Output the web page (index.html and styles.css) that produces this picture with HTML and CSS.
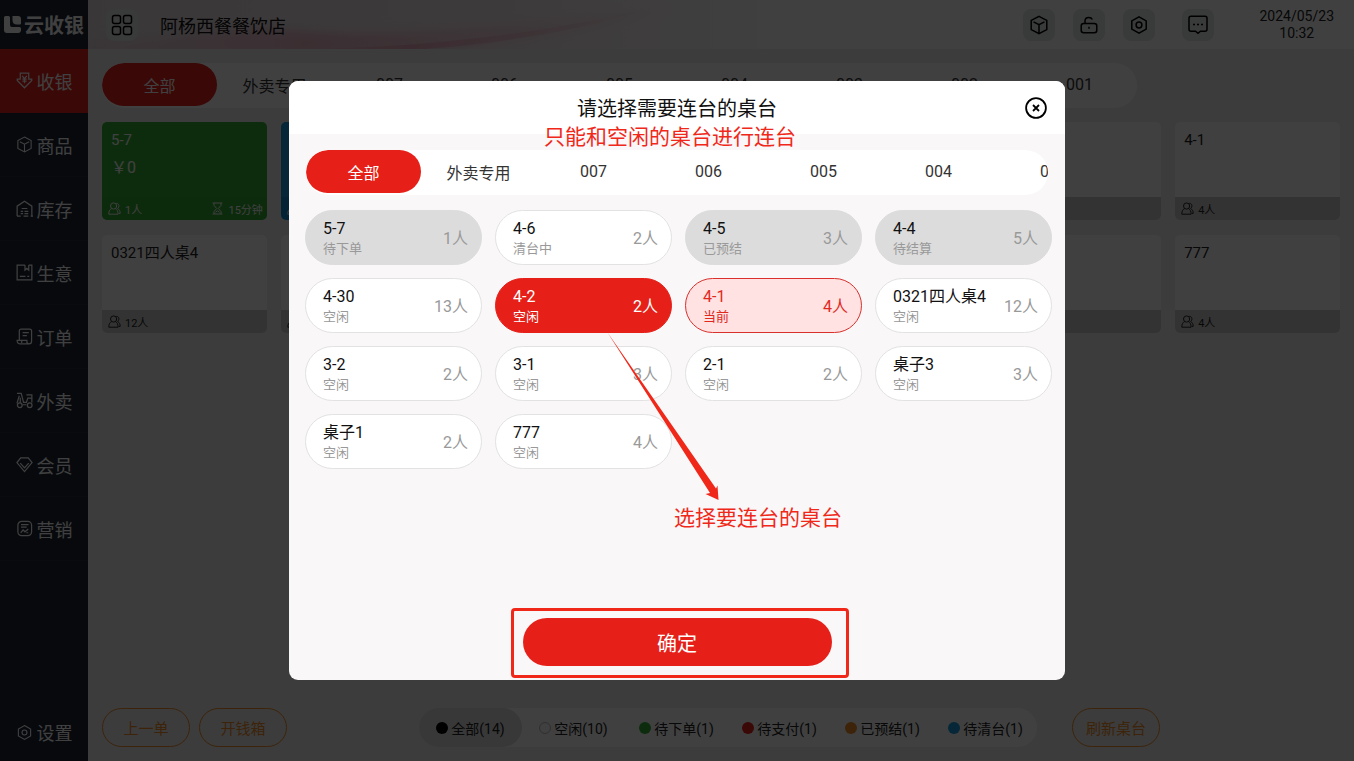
FILE: index.html
```html
<!DOCTYPE html>
<html lang="zh-CN">
<head>
<meta charset="utf-8">
<meta name="viewport" content="width=device-width, initial-scale=1">
<title>云收银</title>
<link rel="stylesheet" href="styles.css">
</head>
<body>
<svg class="sprite" aria-hidden="true">
  <symbol id="i-people" viewBox="0 0 13 13">
    <circle cx="5.600" cy="4" r="3.100"/>
    <path d="M3.600 6.600C1.600 7.600.8 9.300.8 12.200h9.300c0-2.900-.8-4.600-2.600-5.600M8.300 1.300c3 .1 3.400 3.600 1.300 5.200 1.700 1 2.600 2.400 2.600 4.900h-1.400"/>
  </symbol>
  <symbol id="i-box" viewBox="0 0 20 20">
    <path d="M10 1.300l7.800 4.100v9.200L10 18.700l-7.800-4.100V5.400zM4.500 6.800L10 9.600l5.500-2.800M10 9.600v9"/>
  </symbol>
  <symbol id="i-hex" viewBox="0 0 20 20">
    <path d="M10 1.800l7.200 4.100v8.200L10 18.200l-7.200-4.100V5.900z"/><circle cx="10" cy="10" r="2.900"/>
  </symbol>
  <symbol id="i-glass" viewBox="0 0 11 13">
    <path d="M.6 1h9.800M.6 12h9.800M2 1v2.500l2.700 3L2 9.500V12M9 1v2.500l-2.700 3L9 9.500V12M3.500 10.300l2-1.500 2 1.500"/>
  </symbol>
</svg>

<div class="app">
  <nav class="sidebar">
    <div class="brand">
      <svg class="brand-mark" viewBox="0 0 17 17"><path d="M1.500 0h3Q6 0 6 1.500V9q0 2 2 2h7.500Q17 11 17 12.500V14q0 3-3 3H3q-3 0-3-3V1.500Q0 0 1.500 0zM8.500 0H14q3 0 3 3v4.500q0 1-1 1h-3Q8.500 8.500 8.500 4z"/></svg>
      <span>云收银</span>
    </div>
    <a class="nav-item active" href="#"><svg viewBox="0 0 18 18"><path d="M4.500 7.500V1.200h9v6.300h3.200v1.500L9 16.700 1.300 9V7.500zM6.500 4L9 7l2.500-3M9 7v5M6.800 7.500h4.400M6.800 9.700h4.400"/></svg>收银</a>
    <a class="nav-item" href="#"><svg><use href="#i-box"/></svg>商品</a>
    <a class="nav-item" href="#"><svg viewBox="0 0 18 18"><path d="M1.200 17V6.500L9 1.200l7.800 5.300V17M1 17h4M6 9h6M5 12h2.500M9 12h4M5 14.500h2.500M9 14.500h4M8 17h5M15.500 17H18"/></svg>库存</a>
    <a class="nav-item" href="#"><svg viewBox="0 0 18 18"><path d="M9.500 1.200H1.200v15.600h15.600V1.200h-3.300M9.500 1v5.500l2-1.800 2 1.800V1M4 13h6M12 13h2"/></svg>生意</a>
    <a class="nav-item" href="#"><svg viewBox="0 0 18 18"><path d="M3.500 13V3.200q0-2 2-2h9q2 0 2 2V14q0 2.800-2.700 2.800H4Q1.200 16.800 1.200 13h10.300v1.600q0 2.200 2.300 2.200M7 5h6.500M7 8h4.500M6 13v3"/></svg>订单</a>
    <a class="nav-item" href="#"><svg viewBox="0 0 18 18"><path d="M1 1.500h4.500l2.500 9.500h3l1.500-4.500h4.300v4.500M3.500 4L1 12M11 3h5.800v3.500M7 13.500h4"/><circle cx="4" cy="14" r="2.500"/><circle cx="14.500" cy="14" r="2.500"/><path d="M4.500 6v5.300"/></svg>外卖</a>
    <a class="nav-item" href="#"><svg viewBox="0 0 18 18"><path d="M5 2h8l4 5-8 9.500L1 7zM4.500 7.500L9 12.500l4.500-5"/></svg>会员</a>
    <a class="nav-item" href="#"><svg viewBox="0 0 18 18"><rect x="2" y="1.500" width="14.500" height="15" rx="4"/><path d="M5.300 5h8M5.300 7.500h6M5 13.500l2.500-3 2 2 3.500-3M11 13.500h2"/></svg>营销</a>
    <a class="nav-item settings" href="#"><svg><use href="#i-hex"/></svg>设置</a>
  </nav>

  <div class="page">
    <header class="topbar">
      <svg class="wave" viewBox="0 0 700 49" preserveAspectRatio="none" aria-hidden="true">
        <defs>
          <linearGradient id="w1" x1="0" x2="1"><stop offset="0" stop-color="#e8a0b4" stop-opacity=".15"/><stop offset=".35" stop-color="#e890a8" stop-opacity=".5"/><stop offset="1" stop-color="#f0a8b8" stop-opacity="0"/></linearGradient>
          <linearGradient id="w2" x1="0" x2="1"><stop offset="0" stop-color="#e4dce0"/><stop offset=".6" stop-color="#f4e8ec"/><stop offset="1" stop-color="#fff"/></linearGradient>
          <filter id="soft"><feGaussianBlur stdDeviation="4"/></filter>
        </defs>
        <rect width="700" height="49" fill="url(#w2)"/>
        <path d="M0 40C90 42 130 24 200 30S380 34 620 2C520 30 420 40 330 56H0z" fill="url(#w1)" filter="url(#soft)"/>
        <path d="M190 50c120-2 240-10 380-44-90 30-200 44-300 46z" fill="url(#w1)"/>
      </svg>
      <button class="icon-btn" aria-label="菜单"><svg viewBox="0 0 22 22"><rect x="1.500" y="1.500" width="8" height="8" rx="2"/><rect x="12.500" y="1.500" width="8" height="8" rx="2"/><rect x="1.500" y="12.500" width="8" height="8" rx="2"/><rect x="12.500" y="12.500" width="8" height="8" rx="2"/></svg></button>
      <span class="store">阿杨西餐餐饮店</span>
      <div class="tools">
        <button class="icon-btn" aria-label="商品"><svg><use href="#i-box"/></svg></button>
        <button class="icon-btn" aria-label="锁屏"><svg viewBox="0 0 20 20"><rect x="2.200" y="8.500" width="15.600" height="9.300" rx="2.500"/><path d="M6 8.500V6q0-3.500 3.800-3.500Q12.500 2.500 13.300 4.500M10 11.800v2"/></svg></button>
        <button class="icon-btn" aria-label="设置"><svg><use href="#i-hex"/></svg></button>
        <button class="icon-btn message" aria-label="消息"><svg viewBox="0 0 20 20"><path d="M3 1.200h14q2 0 2 2v11q0 2-2 2h-4.500L10 18.300l-2.500-2.100H3q-2 0-2-2v-11q0-2 2-2zM5 9.500h2M9 9.500h2M13 9.500h2"/></svg></button>
      </div>
      <time class="clock" datetime="2024-05-23T10:32">2024/05/23<br>10:32</time>
    </header>

    <main class="content">
      <div class="tabs page-tabs">
        <button class="tab active">全部</button><button class="tab">外卖专用</button><button class="tab">007</button><button class="tab">006</button><button class="tab">005</button><button class="tab">004</button><button class="tab">003</button><button class="tab">002</button><button class="tab">001</button>
      </div>

      <div class="cards">
        <article class="card green"><h3>5-7</h3><p>￥0</p><footer><svg><use href="#i-people"/></svg>1人<span class="timer"><svg><use href="#i-glass"/></svg>15分钟</span></footer></article>
        <article class="card blue"><h3>4-6</h3><footer><svg><use href="#i-people"/></svg>2人</footer></article>
        <article class="card orange"><h3>4-5</h3><footer><svg><use href="#i-people"/></svg>3人</footer></article>
        <article class="card red"><h3>4-4</h3><footer><svg><use href="#i-people"/></svg>5人</footer></article>
        <article class="card"><h3>4-30</h3><footer><svg><use href="#i-people"/></svg>13人</footer></article>
        <article class="card"><h3>4-2</h3><footer><svg><use href="#i-people"/></svg>2人</footer></article>
        <article class="card"><h3>4-1</h3><footer><svg><use href="#i-people"/></svg>4人</footer></article>
        <article class="card"><h3>0321四人桌4</h3><footer><svg><use href="#i-people"/></svg>12人</footer></article>
        <article class="card"><h3>3-2</h3><footer><svg><use href="#i-people"/></svg>2人</footer></article>
        <article class="card"><h3>3-1</h3><footer><svg><use href="#i-people"/></svg>3人</footer></article>
        <article class="card"><h3>2-1</h3><footer><svg><use href="#i-people"/></svg>2人</footer></article>
        <article class="card"><h3>桌子3</h3><footer><svg><use href="#i-people"/></svg>3人</footer></article>
        <article class="card"><h3>桌子1</h3><footer><svg><use href="#i-people"/></svg>2人</footer></article>
        <article class="card"><h3>777</h3><footer><svg><use href="#i-people"/></svg>4人</footer></article>
      </div>

      <div class="actions">
        <button class="outline">上一单</button>
        <button class="outline">开钱箱</button>
        <div class="legend">
          <button class="state active"><i class="dot black"></i>全部(14)</button>
          <button class="state"><i class="dot hollow"></i>空闲(10)</button>
          <button class="state"><i class="dot green"></i>待下单(1)</button>
          <button class="state"><i class="dot red"></i>待支付(1)</button>
          <button class="state"><i class="dot orange"></i>已预结(1)</button>
          <button class="state"><i class="dot blue"></i>待清台(1)</button>
        </div>
        <button class="outline refresh">刷新桌台</button>
      </div>
    </main>
  </div>
</div>

<div class="overlay">
  <section class="modal" role="dialog" aria-modal="true" aria-labelledby="modal-title">
    <header class="modal-head">
      <h2 id="modal-title">请选择需要连台的桌台</h2>
      <button class="close" aria-label="关闭"><svg viewBox="0 0 22 22"><circle cx="11" cy="11" r="9.900"/><path d="M8 8l6 6M14 8l-6 6"/></svg></button>
    </header>
    <div class="modal-body">
      <div class="tabs modal-tabs">
        <button class="tab active">全部</button><button class="tab">外卖专用</button><button class="tab">007</button><button class="tab">006</button><button class="tab">005</button><button class="tab">004</button><button class="tab">003</button>
      </div>
      <div class="tiles">
        <button class="tile busy"><span class="name">5-7</span><span class="status">待下单</span><span class="seats">1人</span></button>
        <button class="tile"><span class="name">4-6</span><span class="status">清台中</span><span class="seats">2人</span></button>
        <button class="tile busy"><span class="name">4-5</span><span class="status">已预结</span><span class="seats">3人</span></button>
        <button class="tile busy"><span class="name">4-4</span><span class="status">待结算</span><span class="seats">5人</span></button>
        <button class="tile"><span class="name">4-30</span><span class="status">空闲</span><span class="seats">13人</span></button>
        <button class="tile selected"><span class="name">4-2</span><span class="status">空闲</span><span class="seats">2人</span></button>
        <button class="tile current"><span class="name">4-1</span><span class="status">当前</span><span class="seats">4人</span></button>
        <button class="tile"><span class="name">0321四人桌4</span><span class="status">空闲</span><span class="seats">12人</span></button>
        <button class="tile"><span class="name">3-2</span><span class="status">空闲</span><span class="seats">2人</span></button>
        <button class="tile"><span class="name">3-1</span><span class="status">空闲</span><span class="seats">3人</span></button>
        <button class="tile"><span class="name">2-1</span><span class="status">空闲</span><span class="seats">2人</span></button>
        <button class="tile"><span class="name">桌子3</span><span class="status">空闲</span><span class="seats">3人</span></button>
        <button class="tile"><span class="name">桌子1</span><span class="status">空闲</span><span class="seats">2人</span></button>
        <button class="tile"><span class="name">777</span><span class="status">空闲</span><span class="seats">4人</span></button>
      </div>
      <button class="confirm">确定</button>
    </div>
    <svg class="arrow" viewBox="0 0 112 168" aria-hidden="true"><path d="M.5.500L109 156.500l1.500-3 1 14.500L98.500 162l4.500-1z"/></svg>
    <span class="note note-top">只能和空闲的桌台进行连台</span>
    <span class="note note-tile">选择要连台的桌台</span>
    <span class="note-frame"></span>
  </section>
</div>
</body>
</html>
```
FILE: styles.css
```css
* { box-sizing: border-box; }

body {
  margin: 0;
  font-family: Roboto, "Noto Sans CJK SC", sans-serif;
  font-size: 16px;
  color: #222;
}

button {
  margin: 0;
  padding: 0;
  border: 0;
  background: none;
  color: inherit;
  font: inherit;
  cursor: pointer;
}

h2, h3, p { margin: 0; font-weight: 400; }

svg { fill: none; stroke: currentColor; }

.sprite { position: absolute; width: 0; height: 0; }

.app { display: flex; min-height: 100vh; }

/* Sidebar */
.sidebar {
  display: flex;
  flex-direction: column;
  flex: none;
  width: 88px;
  background: #1c2434;
  color: #fff;
}

.brand {
  display: flex;
  align-items: center;
  gap: 3px;
  height: 49px;
  padding-left: 4px;
  font-size: 20px;
  font-weight: 700;
  white-space: nowrap;
}

.brand-mark { width: 17px; height: 17px; fill: #fff; stroke: none; }

.nav-item {
  display: flex;
  align-items: center;
  justify-content: center;
  gap: 4px;
  height: 64px;
  border-bottom: 1px solid #262d3c;
  color: #fff;
  font-size: 18px;
  text-decoration: none;
}

.nav-item svg { width: 17px; height: 17px; stroke-width: 1.300; }
.nav-item.active { border-color: #e62019; background: #e62019; }
.nav-item.settings { height: 58px; margin-top: auto; border: 0; }

/* Top bar */
.page { display: flex; flex-direction: column; flex: 1; min-width: 0; background: #f0f0f0; }

.topbar {
  position: relative;
  display: flex;
  align-items: center;
  height: 49px;
  padding: 0 20px 0 18px;
  background: #fff;
}

.topbar > * { position: relative; }

.topbar .wave { position: absolute; top: 0; left: 0; width: 700px; height: 49px; stroke: none; }

.icon-btn {
  display: flex;
  align-items: center;
  justify-content: center;
  width: 32px;
  height: 32px;
  border-radius: 8px;
  background: #e4e6e8;
  color: #000;
}

.icon-btn svg { width: 22px; height: 22px; stroke-width: 1.500; }

.store { margin-left: 22px; font-size: 18px; color: #111; }

.tools { display: flex; gap: 18px; margin-left: auto; }
.tools .icon-btn svg { width: 20px; height: 20px; }
.tools .message { margin-left: 9px; }

.clock { margin-left: 46px; font-size: 14px; line-height: 17px; text-align: center; }

/* Tabs */
.content { display: flex; flex-direction: column; flex: 1; padding: 14px; }

.tabs { display: flex; align-items: flex-start; height: 45px; border-radius: 23px; background: #fff; overflow: hidden; }
.page-tabs { align-self: flex-start; max-width: 100%; }
.tab { flex: none; width: 115px; height: 43px; border-radius: 22px; font-size: 16px; color: #333; }
.tab.active { background: #e62019; color: #fff; }

/* Table cards */
.cards { display: grid; grid-template-columns: repeat(7, 1fr); gap: 15px 14px; margin-top: 14px; }

.card {
  display: flex;
  flex-direction: column;
  height: 98px;
  border-radius: 5px;
  background: #fff;
  overflow: hidden;
}

.card h3 { padding: 8px 9px 0; font-size: 15px; line-height: 20px; }
.card p { padding: 8px 9px 0; font-size: 16px; line-height: 20px; }

.card footer {
  display: flex;
  align-items: center;
  gap: 4px;
  height: 23px;
  margin-top: auto;
  padding: 0 4px 0 6px;
  background: #ccc;
  font-size: 11px;
}

.card footer svg { width: 13px; height: 13px; }
.card .timer { display: flex; align-items: center; gap: 4px; margin-left: auto; }
.card.green, .card.blue, .card.orange, .card.red { color: #fff; }
.card.green footer, .card.blue footer, .card.orange footer, .card.red footer { background: rgba(0, 0, 0, .06); }
.green { background: #36b136; }
.blue { background: #149bdf; }
.orange { background: #f08c28; }
.red { background: #e62019; }

/* Bottom actions */
.actions { display: flex; gap: 9px; margin-top: auto; }

.outline {
  width: 88px;
  height: 39px;
  border: 1px solid #f08c28;
  border-radius: 20px;
  color: #f08c28;
  font-size: 15px;
}

.outline.refresh { margin-left: 26px; }

.legend { display: flex; margin-left: 123px; border-radius: 20px; background: #fff; }

.state {
  display: flex;
  align-items: center;
  justify-content: center;
  gap: 3px;
  width: 103px;
  height: 39px;
  border-radius: 20px;
  font-size: 14px;
  white-space: nowrap;
}

.state.active { background: #dedede; }

.dot { width: 12px; height: 12px; border-radius: 50%; }
.dot.black { background: #000; }
.dot.hollow { border: 1px solid #bbb; }

/* Dialog */
.overlay {
  position: fixed;
  inset: 0;
  display: flex;
  align-items: center;
  justify-content: center;
  background: rgba(0, 0, 0, .75);
}

.modal {
  position: relative;
  display: flex;
  flex-direction: column;
  width: 776px;
  max-width: 96vw;
  min-height: 599px;
  border-radius: 9px;
  background: #f9f7f8;
  overflow: hidden;
}

.modal-head { display: flex; align-items: center; justify-content: center; height: 53px; background: #fff; }
.modal-head h2 { font-size: 20px; color: #111; }

.close { position: absolute; right: 18px; width: 22px; height: 22px; color: #000; }
.close svg { display: block; width: 22px; height: 22px; stroke-width: 1.800; }

.modal-body { display: flex; flex-direction: column; flex: 1; padding: 16px 13px 14px 16px; }
.modal-tabs { margin: 0 4px 0 1px; }

.tiles { display: grid; grid-template-columns: repeat(4, 1fr); gap: 13px; margin-top: 15px; }

.tile {
  display: grid;
  grid-template-columns: 1fr auto;
  grid-template-rows: 20px 20px;
  align-content: center;
  align-items: center;
  height: 55px;
  padding: 2px 13px 0 17px;
  border: 1px solid #e2e2e2;
  border-radius: 28px;
  background: #fff;
  text-align: left;
  white-space: nowrap;
}

.name { font-size: 16px; line-height: 20px; color: #111; }
.status { grid-row: 2; font-size: 13px; line-height: 20px; color: #999; }
.seats { grid-column: 2; grid-row: 1 / 3; padding-bottom: 4px; font-size: 16px; color: #999; }

.tile.busy { background: #dcdcdc; border-color: #dcdcdc; }
.tile.selected { background: #e62019; border-color: #e62019; }
.tile.selected span { color: #fff; }
.tile.current { background: #ffe2e1; border-color: #d9302c; }
.tile.current span { color: #e0281f; }

.confirm {
  align-self: center;
  width: 309px;
  height: 48px;
  margin-top: auto;
  margin-right: 3px;
  border-radius: 24px;
  background: #e62019;
  color: #fff;
  font-size: 20px;
}

/* Callouts drawn over the dialog */
.note { position: absolute; color: #f0281a; font-size: 21px; line-height: 24px; white-space: nowrap; }
.note-top { top: 44px; left: 255px; }
.note-tile { top: 425px; left: 385px; }

.arrow { position: absolute; top: 251px; left: 318px; width: 112px; height: 168px; fill: #f0281a; stroke: none; pointer-events: none; }

.note-frame {
  position: absolute;
  right: 216px;
  bottom: 2px;
  width: 338px;
  height: 70px;
  border: 3px solid #f0281a;
  border-radius: 4px;
  pointer-events: none;
}
```
